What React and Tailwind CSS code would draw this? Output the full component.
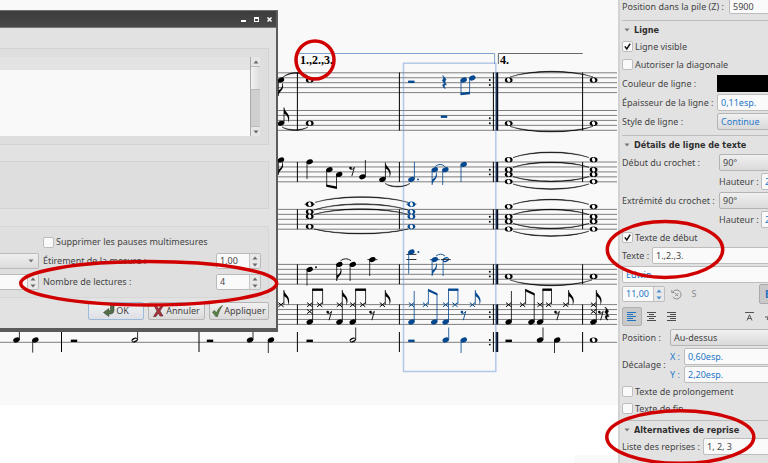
import React from "react";

const INK = "#000000";
const BLUE = "#04488f";

/* ---------- engraving primitives ---------- */

function Staff({ y, x1 = 278, x2 = 617, gap = 4.95 }) {
  return [0, 1, 2, 3, 4].map((i) => (
    <line key={i} x1={x1} x2={x2} y1={y + i * gap} y2={y + i * gap} stroke="#5f5f5f" strokeWidth="0.8" />
  ));
}

function Head({ x, y, c = INK }) {
  return <ellipse cx={x} cy={y} rx="3.3" ry="2.4" fill={c} transform={`rotate(-22 ${x} ${y})`} />;
}

function HalfHead({ x, y, c = INK }) {
  return (
    <g transform={`rotate(-25 ${x} ${y})`}>
      <ellipse cx={x} cy={y} rx="3.2" ry="2.3" fill={c} />
      <ellipse cx={x} cy={y} rx="2.5" ry="0.9" fill="#f9f9f9" />
    </g>
  );
}

function Whole({ x, y, c = INK }) {
  return (
    <g>
      <ellipse cx={x} cy={y} rx="3.9" ry="2.6" fill={c} />
      <ellipse cx={x} cy={y} rx="1.6" ry="2.1" fill="#f9f9f9" transform={`rotate(-20 ${x} ${y})`} />
    </g>
  );
}

function Cross({ x, y, c = INK }) {
  return <path d={`M${x - 2.6} ${y - 2.1}l5.2 4.2M${x - 2.6} ${y + 2.1}l5.2 -4.2`} stroke={c} strokeWidth="1" fill="none" />;
}

function Stem({ x, a, b, c = INK }) {
  return <line x1={x} x2={x} y1={a} y2={b} stroke={c} strokeWidth="0.8" />;
}

function FlagUp({ x, y, c = INK }) {
  return <path d={`M${x} ${y}c0.6 4.2 5 5.6 5.2 10.2c0.1 2 -0.5 3.6 -1.2 5c0.8 -4.6 -0.6 -7.6 -4 -9z`} fill={c} />;
}

function FlagDown({ x, y, c = INK }) {
  return <path d={`M${x} ${y}c0.6 -4 4.4 -5.6 4.8 -9.6c0.1 -1.8 -0.4 -3 -1 -4c0.6 4 -0.6 6.6 -3.8 8z`} fill={c} />;
}

function Beam({ x1, y1, x2, y2, c = INK }) {
  return <path d={`M${x1 - 0.4} ${y1 - 1.2}L${x2 + 0.4} ${y2 - 1.2}V${y2 + 1.2}L${x1 - 0.4} ${y1 + 1.2}z`} fill={c} />;
}

function Tie({ x1, x2, y, peak, y2 = y }) {
  const mid = (y + y2) / 2;
  const d = peak - mid;
  const w = (x2 - x1) * 0.25;
  const k = d > 0 ? 0.5 : -0.5;
  const o = mid + (d * 4) / 3;
  return (
    <path
      d={`M${x1} ${y}C${x1 + w} ${o + k} ${x2 - w} ${o + k} ${x2} ${y2}C${x2 - w} ${o - k} ${x1 + w} ${o - k} ${x1} ${y}z`}
      fill={INK}
      stroke={INK}
      strokeWidth="0.4"
    />
  );
}

function BarRest({ x, y, c = INK }) {
  return <rect x={x - 3.2} y={y - 1.2} width="6.4" height="2.4" fill={c} />;
}

function EighthRest({ x, y, c = INK }) {
  return (
    <g>
      <circle cx={x - 1.5} cy={y - 3} r="1.3" fill={c} />
      <path d={`M${x - 2} ${y - 2}q2.4 1.4 4.4 -1.6l-2.6 8.8`} stroke={c} strokeWidth="0.9" fill="none" />
    </g>
  );
}

function QuarterRest({ x, y, c = INK }) {
  return (
    <path
      d={`M${x - 1.4} ${y - 7}l3.2 4.2c-1.6 2 -1.4 3 0.5 5.4c-2.4 -0.8 -3 0.8 -1.2 3.6c-3.6 -2 -3.4 -5.2 -0.6 -4.9l-2.6 -3.3c2 -2 1.8 -3.2 0.4 -4.6z`}
      fill={c}
      stroke={c}
      strokeWidth="0.5"
    />
  );
}

function Quarter({ x, y, to, c = INK, flag, half }) {
  const up = to < y;
  const sx = up ? x + 3 : x - 2.7;
  return (
    <g>
      {half ? <HalfHead x={x} y={y} c={c} /> : <Head x={x} y={y} c={c} />}
      <Stem x={sx} a={y} b={to} c={c} />
      {flag && (up ? <FlagUp x={sx} y={to} c={c} /> : <FlagDown x={sx} y={to} c={c} />)}
    </g>
  );
}

function Ledger({ x, y, c = INK }) {
  return <line x1={x - 5} x2={x + 5} y1={y} y2={y} stroke={c} strokeWidth="0.8" />;
}

function Dot({ x, y, c = INK }) {
  return <circle cx={x} cy={y} r="0.95" fill={c} />;
}

function Bar({ x, a, b }) {
  return <line x1={x} x2={x} y1={a} y2={b} stroke={INK} strokeWidth="1" />;
}

/* drum figures shared by the plain and the selected bars */
function DrumTail({ x, c = INK }) {
  return (
    <g>
      <Cross x={x} y={304.7} c={c} />
      <Stem x={x + 2.8} a={322} b={291} c={c} />
      <Head x={x} y={322} c={c} />
      <Cross x={x + 14} y={304.7} c={c} />
      <Stem x={x + 17} a={304} b={290} c={c} />
      <Beam x1={x + 17} y1={290} x2={x + 25.6} y2={294.4} c={c} />
      <Stem x={x + 25.6} a={322} b={294} c={c} />
      <Head x={x + 22.8} y={322} c={c} />
    </g>
  );
}

function DrumPair({ x, dx = 10, c = INK }) {
  return (
    <g>
      <Cross x={x} y={304.7} c={c} />
      <Head x={x} y={322} c={c} />
      <Stem x={x + 2.9} a={322} b={289} c={c} />
      <Cross x={x + dx} y={304.7} c={c} />
      <Stem x={x + dx + 2.9} a={304} b={289} c={c} />
      <Beam x1={x + 2.9} y1={289.7} x2={x + dx + 2.9} y2={289.7} c={c} />
    </g>
  );
}

function DrumFlag({ x, note, c = INK }) {
  return (
    <g>
      <Cross x={x} y={304.7} c={c} />
      {note && <Head x={x} y={322} c={c} />}
      <Stem x={x + 2.9} a={note ? 322 : 304.7} b={290} c={c} />
      <FlagUp x={x + 2.9} y={290} c={c} />
    </g>
  );
}

const SPANS = [
  [72.5, 130.5],
  [162, 182],
  [209.3, 229.2],
  [264.3, 284.2],
  [304.5, 324.4],
  [332, 352],
];
const REPEAT_DOTS = [80, 85, 118.3, 123.3, 169.7, 174.4, 216.7, 221.7, 271.7, 276.4, 312.3, 317, 340, 344.6];

function Score() {
  return (
    <svg width="618" height="463" viewBox="0 0 618 463" className="block" role="img" aria-label="Partition">
      <rect width="618" height="463" fill="#f9f9f9" />
      <rect y="405" width="618" height="58" fill="#ffffff" />
      <rect x="574" y="455" width="44" height="8" fill="#f9f9f9" />

      <Staff y={72.8} />
      <Staff y={110.5} />
      <Staff y={162} />
      <Staff y={209.4} />
      <Staff y={264.4} />
      <Staff y={304.6} />
      <line x1="0" x2="617" y1="342.3" y2="342.3" stroke="#6f6f6f" strokeWidth="0.9" />

      {[297.4, 399.4, 493.4, 582.6].map((x) => SPANS.map(([a, b]) => <Bar key={x + "-" + a} x={x} a={a} b={b} />))}
      {SPANS.map(([a, b]) => (
        <rect key={a} x="495.6" y={a} width="2.6" height={b - a} fill="#000a1c" />
      ))}
      {REPEAT_DOTS.map((y) => (
        <Dot key={y} x={489.8} y={y} />
      ))}

      {/* voltas */}
      <path d="M297 64V53.5H494.6V64" fill="none" stroke="#7fa3cc" strokeWidth="1" />
      <path d="M498.4 64V53.5H582.8" fill="none" stroke="#444" strokeWidth="0.8" />
      <text x="300" y="64" fontFamily="Liberation Serif, serif" fontWeight="700" fontSize="12">1.,2.,3.</text>
      <text x="500" y="64" fontFamily="Liberation Serif, serif" fontWeight="700" fontSize="12">4.</text>

      {/* voices 1 and 2 */}
      <Quarter x={281} y={80} to={96} flag />
      <Tie x1={282} x2={309} y={78} y2={77} peak={73} />
      <Whole x={309.7} y={80} />
      <Quarter x={281} y={123.3} to={107.5} flag />
      <Tie x1={282} x2={308} y={127} peak={130} />
      <Whole x={309.7} y={123.2} />
      <BarRest x={411.3} y={81.8} c={BLUE} />
      <QuarterRest x={444.3} y={82.4} c={BLUE} />
      <Quarter x={463.7} y={80} to={94.6} c={BLUE} />
      <Quarter x={472.3} y={78} to={93.4} c={BLUE} />
      <Beam x1={461} y1={94} x2={469.6} y2={93} c={BLUE} />
      <BarRest x={444} y={116.7} c={BLUE} />

      {/* third staff */}
      <Quarter x={281} y={160} to={175} flag />
      <Quarter x={309.7} y={161.8} to={179} />
      <Quarter x={329.4} y={169.7} to={186} />
      <Quarter x={339.2} y={174.4} to={188.4} />
      <Beam x1={326.7} y1={185.6} x2={336.5} y2={187.8} />
      <EighthRest x={352} y={171} />
      <Quarter x={362.4} y={176.8} to={160} />
      <Quarter x={382.4} y={179.4} to={162.4} flag />
      <Tie x1={385} x2={410} y={183.4} peak={186.6} />
      <Quarter x={411.4} y={179.4} to={162} c={BLUE} />
      <Dot x={418} y={179.4} c={BLUE} />
      <Quarter x={434.8} y={169.7} to={185} c={BLUE} flag />
      <Quarter x={445.4} y={169.7} to={185} c={BLUE} />
      <path d="M435.4 166.4q4.6 -4 9.4 0" fill="none" stroke={BLUE} strokeWidth="0.9" />
      <Quarter x={463.7} y={164.4} to={182} c={BLUE} />

      {/* fourth staff */}
      <Ledger x={309.7} y={204.2} />
      <Ledger x={411.4} y={204.2} c={BLUE} />
      {[204.2, 211.8, 216.4, 226.6].map((y) => (
        <g key={y}>
          <Whole x={309.7} y={y} />
          <Whole x={411.4} y={y} c={BLUE} />
        </g>
      ))}
      <Tie x1={315} x2={408} y={202.4} peak={197} />
      <Tie x1={314} x2={408} y={210} peak={204.2} />
      <Tie x1={314} x2={408} y={214.4} peak={209.2} />
      <Tie x1={314} x2={408} y={229} peak={233.6} />

      {/* fifth staff */}
      <Quarter x={309.7} y={269.4} to={285.6} />
      <Dot x={316} y={267.2} />
      <Quarter x={339.4} y={264.4} to={281} flag />
      <Quarter x={352.8} y={264.4} to={281} />
      <path d="M340.6 260.6q5 -3.6 10.4 0" fill="none" stroke={INK} strokeWidth="0.9" />
      <Ledger x={372.4} y={259.6} />
      <Quarter x={372.4} y={259.6} to={276} />
      <Ledger x={411.4} y={254.4} />
      <Ledger x={411.4} y={259.5} />
      <Quarter x={411.4} y={252} to={273.8} c={BLUE} />
      <Dot x={418.4} y={252} c={BLUE} />
      <Ledger x={434.8} y={259.6} c={BLUE} />
      <Quarter x={434.8} y={259.6} to={276} c={BLUE} flag />
      <Quarter x={445.8} y={259.6} to={276} c={BLUE} half />
      <Ledger x={445.8} y={259.6} />
      <path d="M436 256q4.6 -3.6 9 0" fill="none" stroke={BLUE} strokeWidth="0.9" />

      {/* drums */}
      <DrumFlag x={281} />
      <DrumPair x={309.7} />
      <Cross x={309.7} y={311.6} />
      <EighthRest x={329.2} y={315} />
      <DrumFlag x={339.4} note />
      <DrumPair x={352.7} />
      <EighthRest x={372} y={315} />
      <DrumFlag x={382.4} />
      <DrumTail x={411.4} c={BLUE} />
      <DrumPair x={445.6} dx={9.4} c={BLUE} />
      <EighthRest x={463.4} y={315} c={BLUE} />
      <DrumFlag x={472.4} c={BLUE} />
      <DrumTail x={508.6} />
      <DrumPair x={540} dx={8.6} />
      <EighthRest x={557} y={315} />
      <DrumFlag x={565.7} />
      <DrumFlag x={593.4} note />
      <Cross x={593.4} y={311.6} />
      <EighthRest x={600.8} y={315} />
      <QuarterRest x={606.8} y={314} />

      {/* last staff */}
      <Quarter x={16.4} y={340} to={330} />
      <Quarter x={35.4} y={340} to={352.6} />
      <Bar x={61.5} a={330} b={352} />
      <BarRest x={74} y={340.8} />
      <Quarter x={134.6} y={340} to={330} half />
      <Bar x={199} a={330} b={352} />
      <BarRest x={210} y={340.8} />
      <Quarter x={250} y={340} to={330} />
      <Quarter x={271} y={340} to={353} />
      <BarRest x={309.7} y={340.8} />
      <Quarter x={352.7} y={340} to={327.5} half />
      <BarRest x={411.4} y={340.8} c={BLUE} />
      <Quarter x={445.7} y={340} to={327.5} c={BLUE} />
      <Quarter x={463.8} y={340} to={353} c={BLUE} />
      <BarRest x={508.7} y={340.8} />
      <Quarter x={540} y={340} to={327.5} />
      <Quarter x={557.2} y={340} to={353} />

      {/* held notes of the fourth ending */}
      {[80, 123.3, 159.7, 169.7, 174.4, 181.6, 206.6, 216.7, 221.4, 229, 276.4].map((y) => (
        <g key={y}>
          <Whole x={508.7} y={y} />
          <Whole x={593.6} y={y} />
        </g>
      ))}
      <Whole x={593.6} y={340} />
      <Tie x1={510} x2={593} y={77} peak={71.6} />
      <Tie x1={510} x2={593} y={126.4} peak={131.6} />
      <Tie x1={513} x2={589} y={157.6} peak={152.3} />
      <Tie x1={513} x2={589} y={167.4} peak={162.4} />
      <Tie x1={513} x2={589} y={176.6} peak={181.4} />
      <Tie x1={513} x2={589} y={184} peak={189} />
      <Tie x1={513} x2={589} y={204.4} peak={199.6} />
      <Tie x1={513} x2={589} y={214.6} peak={209.6} />
      <Tie x1={513} x2={589} y={223.4} peak={228.4} />
      <Tie x1={513} x2={589} y={231.2} peak={236} />
      <Tie x1={510} x2={592} y={280} peak={285.4} />

      {/* selected bar */}
      <rect x="403.5" y="63.2" width="92.3" height="308.3" fill="none" stroke="#6f97d8" strokeOpacity="0.5" strokeWidth="1.5" />
    </svg>
  );
}

/* ---------- form controls ---------- */

function Arrow({ down, color = "#666" }) {
  return (
    <svg width="6" height="4" viewBox="0 0 6 4" className="block" aria-hidden="true">
      <path d={down ? "M0.5 0.5h5L3 3.5z" : "M0.5 3.5h5L3 0.5z"} fill={color} />
    </svg>
  );
}

function Stepper({ color }) {
  return (
    <span className="flex w-[11px] flex-col border-l border-[#c4c4c4] bg-[#e8e8e8]">
      <button type="button" aria-label="Augmenter" className="flex flex-1 items-center justify-center"><Arrow color={color} /></button>
      <button type="button" aria-label="Diminuer" className="flex flex-1 items-center justify-center"><Arrow down color={color} /></button>
    </span>
  );
}

function Tick({ label, checked }) {
  return (
    <label className="flex items-center gap-[2px]">
      <span className="relative flex size-[11px]">
        <input type="checkbox" defaultChecked={checked} className="peer size-[11px] appearance-none rounded-xs border border-[#bdbdbd] bg-[#fafafa]" />
        <svg viewBox="0 0 11 11" className="pointer-events-none absolute inset-0 hidden peer-checked:block" aria-hidden="true">
          <path d="M2.8 5.4L4.8 8L8.2 2.6" fill="none" stroke="#111" strokeWidth="1.5" />
        </svg>
      </span>
      <span>{label}</span>
    </label>
  );
}

function DialogSpin({ id, value }) {
  return (
    <span className="flex h-4 w-[45px] overflow-hidden rounded-xs border border-[#bababa]">
      <input id={id} defaultValue={value} className="w-0 flex-1 bg-[#fafafa] pl-[3px]" />
      <Stepper color="#6a6a6a" />
    </span>
  );
}

function Dialog() {
  return (
    <section aria-label="Propriétés de la mesure" className="absolute top-[10px] left-0 flex w-[278px] flex-col border-t border-r-2 border-b-4 border-t-[#6e6e6e] border-r-[#5c5c5c] border-b-[#5a5a5a] bg-[#e2e2e2] font-['Noto_Sans',sans-serif] text-[9px] leading-3 text-[#454545]">
      <header className="flex h-[17px] items-center justify-end gap-1 border-b border-[#777] bg-linear-to-b from-[#3c3c3c] to-[#494949] pr-[2px]">
        <button type="button" aria-label="Réduire" className="flex h-2 w-[9px] items-end justify-center pb-px"><span className="h-[2px] w-[5px] bg-white" /></button>
        <button type="button" aria-label="Agrandir" className="flex h-2 w-[9px] items-center justify-center"><span className="size-[5px] border border-t-2 border-white" /></button>
        <button type="button" aria-label="Fermer" className="flex h-2 w-[9px] items-center justify-center">
          <svg width="5" height="5" viewBox="0 0 5 5" aria-hidden="true"><path d="M0.5 0.5l4 4M4.5 0.5l-4 4" stroke="#fff" strokeWidth="1.5" /></svg>
        </button>
      </header>
      <div className="flex flex-col pt-5 pr-[7px] pb-2">
        <div className="flex h-[97px] border border-l-0 border-[#d3d3d3] bg-[#dedede] py-2 pr-2">
          <div className="flex flex-1 flex-col">
            <div className="h-[13px] bg-[#e3e3e3]" />
            <div className="flex-1 bg-[#f9f9f9]" />
          </div>
          <div className="flex w-[10px] flex-col border-l border-[#a9a9a9] bg-[#e6e6e6]">
            <span className="flex h-[9px] items-center justify-center"><Arrow color="#666" /></span>
            <span className="h-6 border-y border-[#bbb] bg-linear-to-r from-[#f3f3f3] to-[#dcdcdc]" />
            <span className="flex-1 border-b border-[#bbb] bg-[#cfcfcf]" />
            <span className="flex h-[9px] items-center justify-center"><Arrow down color="#666" /></span>
          </div>
        </div>
        <div className="mt-4 h-12 border border-l-0 border-[#d3d3d3] bg-[#dedede]" />
        <div className="mt-[17px] flex h-[72px] border border-l-0 border-[#d6d6d6] bg-[#dfdfdf] pt-[9px] pr-[7px]">
          <div className="flex w-[39px] flex-col gap-[5px] pt-[17px]">
            <span className="relative flex">
              <select aria-label="Type" className="h-4 w-full appearance-none rounded-r-xs border border-l-0 border-[#bababa] bg-linear-to-b from-[#efefef] to-[#dcdcdc]" />
              <span className="pointer-events-none absolute top-[6px] right-[5px]"><Arrow down color="#777" /></span>
            </span>
            <span className="flex h-4 overflow-hidden rounded-r-xs border border-l-0 border-[#bababa]">
              <input aria-label="Valeur" className="w-0 flex-1 bg-[#fafafa]" />
              <Stepper color="#6a6a6a" />
            </span>
          </div>
          <div className="flex flex-1 flex-col gap-[5px] pl-1">
            <Tick label="Supprimer les pauses multimesures" />
            <div className="flex h-4 items-center justify-between">
              <label htmlFor="stretch">Étirement de la mesure :</label>
              <DialogSpin id="stretch" value="1,00" />
            </div>
            <div className="flex h-4 items-center justify-between">
              <label htmlFor="plays">Nombre de lectures :</label>
              <DialogSpin id="plays" value="4" />
            </div>
          </div>
        </div>
        <div className="mt-1 flex justify-end gap-1">
          <button type="button" className="flex h-[18px] w-14 items-center justify-center gap-px rounded-xs border border-[#9db8d8] bg-linear-to-b from-[#f2f2f2] to-[#dcdfe4]">
            <svg width="12" height="12" viewBox="0 0 12 12" aria-hidden="true"><path d="M7.5 0.5h3.5v4.500c0 2.800 -1.500 4 -4 4H5.800v2.500L0.500 7.500L5.800 3.500v2.200H6.500c0.800 0 1 -0.500 1 -1.200z" fill="#526f49" stroke="#38482f" strokeWidth="0.6" /></svg>
            OK
          </button>
          <button type="button" className="flex h-[18px] w-[57px] items-center justify-center gap-[2px] rounded-xs border border-[#b5b5b5] bg-linear-to-b from-[#f0f0f0] to-[#dadada]">
            <svg width="11" height="12" viewBox="0 0 11 12" aria-hidden="true"><path d="M1.500 1.500h2.500l1.700 2.800L8 0.500h2.500L7 6l3 5H7L5.300 8L3 11.500H0.500L4 6z" fill="#a8343a" stroke="#5a1d20" strokeWidth="0.6" /></svg>
            Annuler
          </button>
          <button type="button" className="flex h-[18px] w-[60px] items-center justify-center gap-px rounded-xs border border-[#b5b5b5] bg-linear-to-b from-[#f0f0f0] to-[#dadada]">
            <svg width="11" height="12" viewBox="0 0 11 12" aria-hidden="true"><path d="M0.500 7l2 -1.500L4.500 8C5.500 5 7.500 2 10.500 0.500C8 4 6.500 8 5.500 11.500H3.800z" fill="#5c8346" stroke="#3b5330" strokeWidth="0.6" /></svg>
            Appliquer
          </button>
        </div>
      </div>
    </section>
  );
}

/* ---------- inspector ---------- */

const FIELD = "h-[17px] min-w-0 flex-1 rounded-xs border border-[#bdbdbd] bg-[#fafafa] pl-[3px]";
const SELECT = "h-[17px] min-w-0 flex-1 appearance-none rounded-xs border border-[#b4b4b4] bg-linear-to-b from-[#f0f0f0] to-[#dadada] pl-[3px]";

function Heading({ children }) {
  return (
    <h2 className="flex h-[18px] items-center gap-1 border-t border-[#bcbcbc] pl-[2px] font-['DejaVu_Sans_Condensed','DejaVu_Sans',sans-serif] font-bold text-[#2f2f2f]">
      <Arrow down color="#777" />
      {children}
    </h2>
  );
}

function Row({ children }) {
  return <div className="flex h-[19px] items-center">{children}</div>;
}

function AlignIcon({ d, color }) {
  return (
    <svg width="10" height="9" viewBox="0 0 10 9" aria-hidden="true">
      <path d={d} stroke={color} strokeWidth="1" />
    </svg>
  );
}

function Inspector() {
  return (
    <aside aria-label="Inspecteur" className="w-[150px] shrink-0 overflow-hidden border-l-2 border-[#d2d2d2] bg-[#e2e2e2] font-['Noto_Sans',sans-serif] text-[9px] leading-3 text-[#454545]">
      <div className="flex w-[190px] flex-col pl-[2px]">
        <div className="flex h-5 items-start">
          <label htmlFor="z" className="w-[107px] leading-[14px]">Position dans la pile (Z) :</label>
          <input id="z" defaultValue="5900" className="h-[14px] min-w-0 flex-1 rounded-b-xs border border-t-0 border-[#bdbdbd] bg-[#fafafa] pl-[3px]" />
        </div>

        <Heading>Ligne</Heading>
        <div className="flex h-[17px] items-center"><Tick label="Ligne visible" checked /></div>
        <Row><Tick label="Autoriser la diagonale" /></Row>
        <Row>
          <label htmlFor="colour" className="w-[95px]">Couleur de ligne :</label>
          <button id="colour" type="button" aria-label="Couleur de ligne" className="h-[17px] flex-1 bg-black" />
        </Row>
        <Row>
          <label htmlFor="thick" className="w-[95px]">Épaisseur de la ligne :</label>
          <input id="thick" defaultValue="0,11esp." className={FIELD + " text-[#1f78c8]"} />
        </Row>
        <Row>
          <label htmlFor="style" className="w-[95px]">Style de ligne :</label>
          <select id="style" className={SELECT + " text-[#1f78c8]"}><option>Continue</option></select>
        </Row>
        <div className="h-1" />

        <Heading>Détails de ligne de texte</Heading>
        <Row>
          <label htmlFor="hook1" className="w-[97px]">Début du crochet :</label>
          <select id="hook1" className={SELECT}><option>90°</option></select>
        </Row>
        <Row>
          <label htmlFor="h1" className="ml-[97px] w-[42px]">Hauteur :</label>
          <input id="h1" defaultValue="2,00esp." className={FIELD + " text-[#1f78c8]"} />
        </Row>
        <Row>
          <label htmlFor="hook2" className="w-[97px]">Extrémité du crochet :</label>
          <select id="hook2" className={SELECT}><option>90°</option></select>
        </Row>
        <Row>
          <label htmlFor="h2" className="ml-[97px] w-[42px]">Hauteur :</label>
          <input id="h2" defaultValue="2,00esp." className={FIELD + " text-[#1f78c8]"} />
        </Row>
        <div className="flex h-[17px] items-center"><Tick label="Texte de début" checked /></div>
        <Row>
          <label htmlFor="begin" className="w-[30px]">Texte :</label>
          <input id="begin" defaultValue="1.,2.,3." className={FIELD} />
        </Row>
        <Row>
          <input aria-label="Police" defaultValue="Edwin" className={FIELD + " text-[#1f78c8]"} />
        </Row>
        <div className="flex h-5 items-center">
          <span className="flex h-4 w-[43px] overflow-hidden rounded-xs border border-[#bdbdbd]">
            <input aria-label="Taille" defaultValue="11,00" className="w-0 flex-1 bg-[#fafafa] pl-[3px] text-[#1f78c8]" />
            <Stepper color="#4d8fd0" />
          </span>
          <button type="button" aria-label="Réinitialiser" className="ml-[6px]">
            <svg width="11" height="11" viewBox="0 0 11 11" fill="none" stroke="#8d8d8d" strokeWidth="1" aria-hidden="true">
              <path d="M1.800 3A4.500 4.500 0 1 1 1.800 8M0.800 1v2.600h2.600M4.200 4.200l3 3M7.200 4.200l-3 3" />
            </svg>
          </button>
          <button type="button" className="ml-2 w-2 text-center text-[#8a8a8a]">S</button>
          <button type="button" className="ml-[61px] flex h-5 w-6 items-center rounded-xs border border-[#a9a9a9] bg-[#c9c9c9] pl-[5px] text-[10px] font-bold text-[#1f6fbd]">B</button>
        </div>
        <div className="flex h-6 items-center">
          <button type="button" aria-label="Aligner à gauche" className="flex h-[19px] w-5 items-center justify-center rounded-xs border border-[#b0b0b0] bg-[#c9c9c9]">
            <AlignIcon color="#1f72bf" d="M0 0.500h9M0 2.500h6M0 4.500h9M0 6.500h6M0 8.500h9" />
          </button>
          <button type="button" aria-label="Centrer" className="flex h-[19px] w-5 items-center justify-center">
            <AlignIcon color="#4b4b4b" d="M0 0.500h9M2 2.500h5M0 4.500h9M2 6.500h5M0 8.500h9" />
          </button>
          <button type="button" aria-label="Aligner à droite" className="flex h-[19px] w-5 items-center justify-center">
            <AlignIcon color="#4b4b4b" d="M0 0.500h9M3 2.500h6M0 4.500h9M3 6.500h6M0 8.500h9" />
          </button>
          <button type="button" aria-label="Aligner en haut" className="ml-[61px] flex h-[19px] w-3 items-center justify-center">
            <svg width="9" height="9" viewBox="0 0 9 9" fill="none" stroke="#555" aria-hidden="true">
              <path d="M0 0.500h9M2 8.500L4.500 2.800L7 8.500M3 6.500h3" strokeWidth="1" />
            </svg>
          </button>
          <button type="button" aria-label="Aligner au milieu" className="ml-2 flex h-[19px] w-3 items-center justify-center">
            <svg width="9" height="9" viewBox="0 0 9 9" fill="none" stroke="#555" aria-hidden="true">
              <path d="M0 5h9M2 8L4.500 2L7 8" strokeWidth="1" />
            </svg>
          </button>
        </div>
        <Row>
          <label htmlFor="pos" className="w-12">Position :</label>
          <select id="pos" className={SELECT}><option>Au-dessus</option></select>
        </Row>
        <div className="flex items-center">
          <span className="w-12 shrink-0 whitespace-nowrap">Décalage :</span>
          <div className="flex min-w-0 flex-1 flex-col text-[#1f78c8]">
            <Row>
              <label htmlFor="dx" className="w-[14px]">X :</label>
              <input id="dx" defaultValue="0,60esp." className={FIELD} />
            </Row>
            <div className="flex h-[17px] items-center">
              <label htmlFor="dy" className="w-[14px]">Y :</label>
              <input id="dy" defaultValue="2,20esp." className={FIELD} />
            </div>
          </div>
        </div>
        <div className="flex h-[17px] items-center"><Tick label="Texte de prolongement" /></div>
        <div className="flex h-[17px] items-center"><Tick label="Texte de fin" /></div>
        <div className="h-[3px]" />

        <Heading>Alternatives de reprise</Heading>
        <div className="flex h-[17px] items-center">
          <label htmlFor="list" className="w-[81px]">Liste des reprises :</label>
          <input id="list" defaultValue="1, 2, 3" className={FIELD} />
        </div>
      </div>
    </aside>
  );
}

export default function App() {
  return (
    <div className="relative flex h-screen overflow-hidden bg-white">
      <main className="relative min-w-0 flex-1 overflow-hidden">
        <Score />
        <Dialog />
      </main>
      <Inspector />
      <svg width="768" height="463" viewBox="0 0 768 463" className="pointer-events-none absolute top-0 left-0" fill="none" stroke="#d00000" strokeWidth="3.5" aria-hidden="true">
        <circle cx="315" cy="60" r="19" />
        <ellipse cx="148.700" cy="283.300" rx="128" ry="21.700" />
        <ellipse cx="665" cy="249.500" rx="57.700" ry="28" />
        <ellipse cx="680.300" cy="437" rx="73.500" ry="26.300" />
      </svg>
    </div>
  );
}
